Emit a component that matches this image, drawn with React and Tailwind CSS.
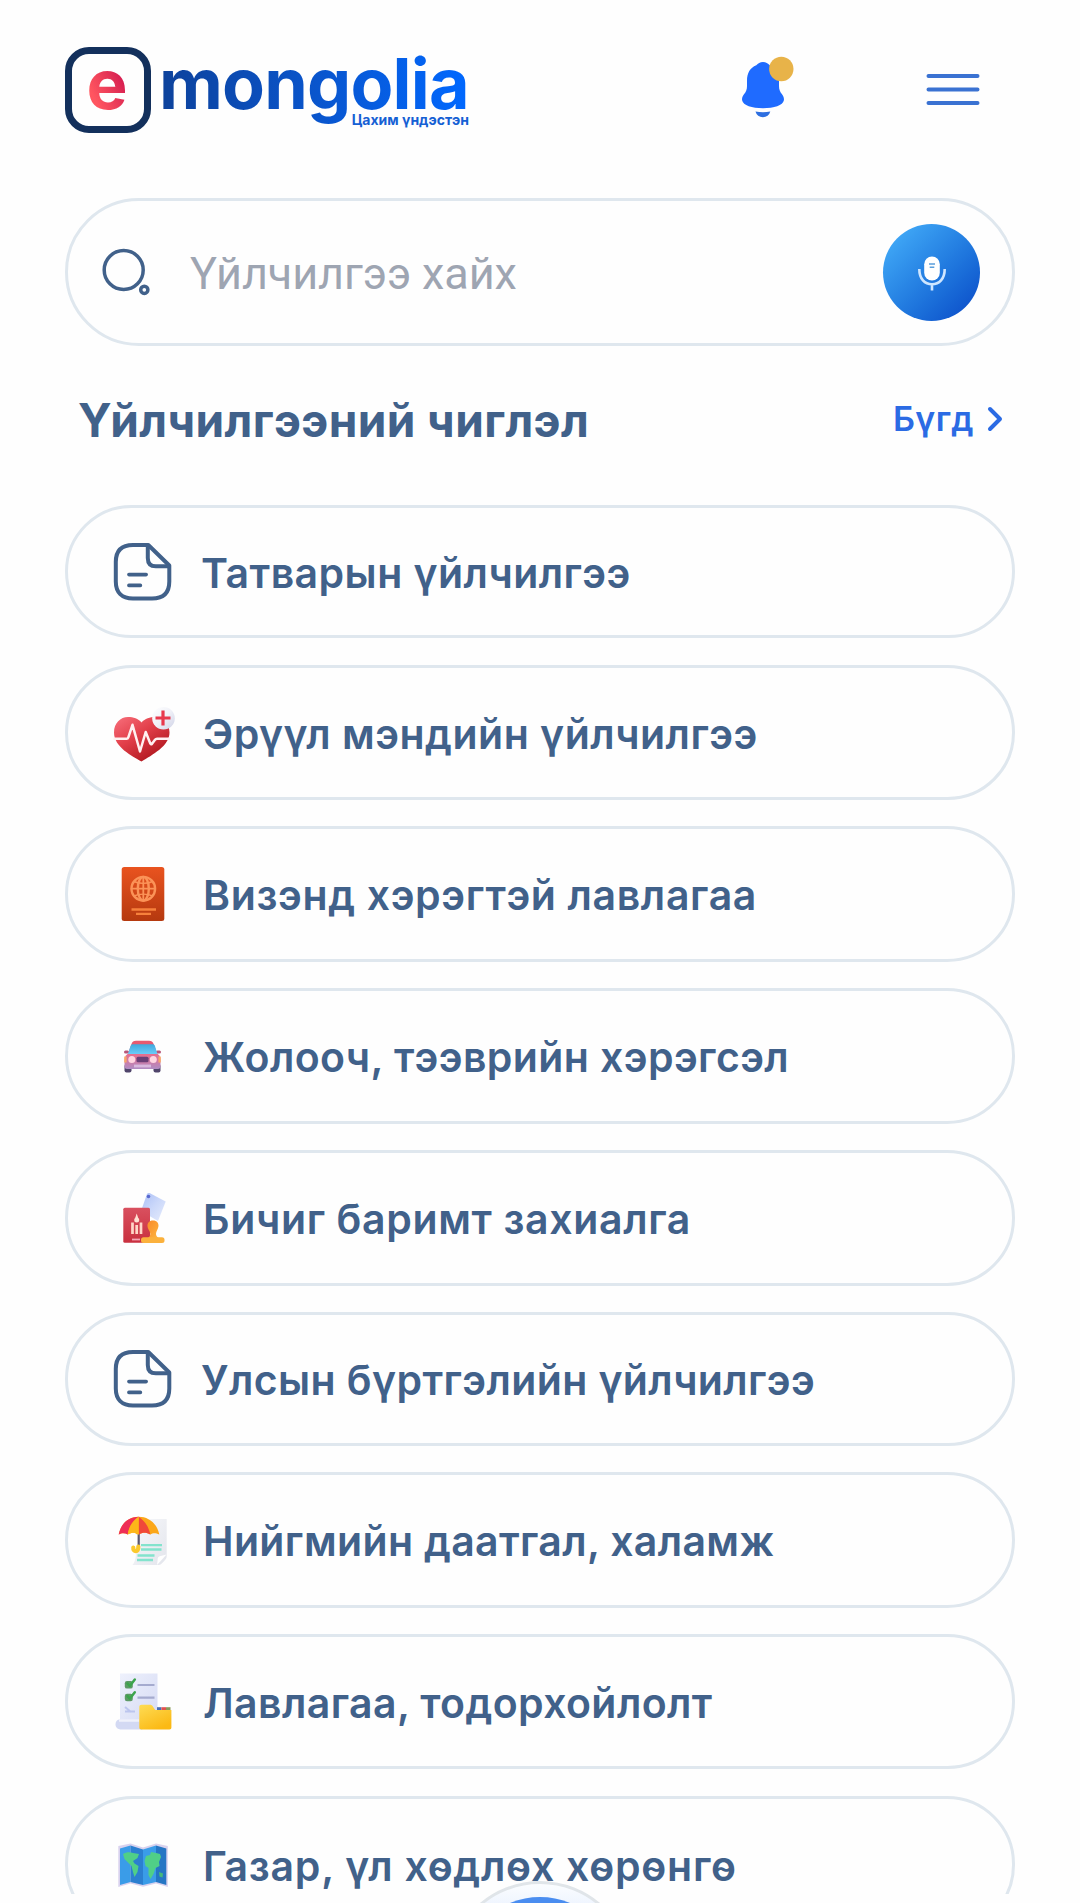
import React from "react";

const stroke = { fill: "none", strokeLinecap: "round", strokeLinejoin: "round" };

function Slot({ children }) {
  return (
    <svg viewBox="0 0 66 66" className="h-[66px] w-[66px] shrink-0">
      {children}
    </svg>
  );
}

function DocIcon() {
  return (
    <Slot>
      <g {...stroke} stroke="#41618a" strokeWidth="4">
        <path d="M38.3 6H23C11 6 5.8 12 5.8 23v19.5c0 11 6 17 17.2 17h19c11.5 0 17.3-6 17.3-17V26.5Z" />
        <path d="M37.8 7.500V19c0 5.500 3 8.300 8 8.300h13" />
        <path d="M18.900 35.600h17.300M18.900 46.400h11.500" strokeWidth="3.600" />
      </g>
    </Slot>
  );
}

function HeartIcon() {
  return (
    <Slot>
      <defs>
        <linearGradient id="heart" x1="0" y1="0" x2="0.800" y2="1">
          <stop offset="0" stopColor="#f8707c" />
          <stop offset="0.450" stopColor="#e23f4a" />
          <stop offset="1" stopColor="#a81218" />
        </linearGradient>
        <linearGradient id="badge" x1="0" y1="0" x2="1" y2="1">
          <stop offset="0" stopColor="#ffffff" />
          <stop offset="0.500" stopColor="#f0f1f8" />
          <stop offset="1" stopColor="#cfd2e6" />
        </linearGradient>
      </defs>
      <path d="M31.500 61.500C22 56 4 47 4 32.500 4 23 10.500 17 18 17c5.500 0 10 1.500 13.500 5.500C35 18.500 40 17 45 17c8.500 0 14.500 6.500 14.500 15.500C59.500 46 42 55 31.500 61.500Z" fill="url(#heart)" />
      <path d="M4.500 38.800h12c1 0 1.500-.5 1.800-1.500l4.200-12.500L30 51.500 35.700 32l4.600 11.500c.5 1 1 1 1.700.3l3-4c.6-.8 1-1 2-1h12" {...stroke} stroke="#fff1f1" strokeWidth="2.500" />
      <circle cx="53.500" cy="18.300" r="11.300" fill="url(#badge)" />
      <path d="M53 10.500v15M45.500 18h15" stroke="#e8384c" strokeWidth="3.200" />
    </Slot>
  );
}

function PassportIcon() {
  return (
    <Slot>
      <defs>
        <linearGradient id="pass" x1="0" y1="0" x2="0" y2="1">
          <stop offset="0" stopColor="#e9531f" />
          <stop offset="1" stopColor="#b5390f" />
        </linearGradient>
      </defs>
      <rect x="11.700" y="6" width="42.600" height="54" rx="2.500" fill="url(#pass)" />
      <g {...stroke} stroke="#fb9358" strokeWidth="2.400">
        <circle cx="33.300" cy="27.700" r="11.800" />
        <ellipse cx="33.300" cy="27.700" rx="5.500" ry="11.800" />
        <path d="M33.300 16v23.400M21.500 27.700h23.600" strokeWidth="1.800" />
        <path d="M24 20.500c5 2.500 13.600 2.500 18.600 0M24 35c5-2.500 13.600-2.500 18.600 0" strokeWidth="1.400" />
      </g>
      <path d="M21.500 48.500h24.500M26 52.900h15" stroke="#f6813c" strokeWidth="2.300" />
    </Slot>
  );
}

function CarIcon() {
  return (
    <Slot>
      <defs>
        <linearGradient id="glass" x1="0" y1="0" x2="0" y2="1">
          <stop offset="0" stopColor="#3fa9dd" />
          <stop offset="1" stopColor="#6dcdfa" />
        </linearGradient>
        <linearGradient id="carbody" x1="0" y1="0" x2="0" y2="1">
          <stop offset="0" stopColor="#e86d8c" />
          <stop offset="1" stopColor="#b08cc4" />
        </linearGradient>
      </defs>
      <rect x="14.500" y="41" width="7" height="8.500" rx="2" fill="#50456b" />
      <rect x="43.500" y="41" width="7" height="8.500" rx="2" fill="#50456b" />
      <rect x="14" y="27.500" width="5" height="3" rx="1.500" fill="#b8567a" />
      <rect x="46" y="27.500" width="5" height="3" rx="1.500" fill="#b8567a" />
      <path d="M21.500 21c.8-2.300 2-3.200 4.500-3.200h13c2.500 0 3.800.9 4.600 3.200L47.500 31H17.800Z" fill="#e65a70" />
      <path d="M23 21.300h19.500c1.500 0 2 .6 2.500 2L47.600 31.500H17.700L20.500 23.300c.5-1.400 1-2 2.500-2Z" fill="url(#glass)" />
      <path d="M17.500 31h30.300c2 1.500 2.700 3.500 2.700 6v6.500c0 1.500-.8 2.500-2.500 2.500H17c-1.700 0-2.500-1-2.500-2.500V37c0-2.500 1-4.500 3-6Z" fill="url(#carbody)" />
      <rect x="26.500" y="33.800" width="12" height="5.500" rx="1.500" fill="#6a3f77" />
      <circle cx="21.800" cy="36.500" r="3.500" fill="#ffd5e1" />
      <circle cx="43.300" cy="36.500" r="3.500" fill="#ffd5e1" />
      <path d="M15.400 33.500v6M49.600 33.500v6" stroke="#f9a86a" strokeWidth="2.400" />
      <path d="M24 43h17" stroke="#d8b9df" strokeWidth="2.800" />
    </Slot>
  );
}

function StampIcon() {
  return (
    <Slot>
      <defs>
        <linearGradient id="bluecard" x1="0" y1="0" x2="1" y2="1">
          <stop offset="0" stopColor="#a9bdf5" />
          <stop offset="0.500" stopColor="#cbd8fa" />
          <stop offset="1" stopColor="#e6ecfc" />
        </linearGradient>
        <linearGradient id="redbook" x1="0" y1="0" x2="0" y2="1">
          <stop offset="0" stopColor="#d9505f" />
          <stop offset="1" stopColor="#c9303f" />
        </linearGradient>
        <linearGradient id="stamp" x1="0" y1="0" x2="1" y2="1">
          <stop offset="0" stopColor="#f98a2b" />
          <stop offset="1" stopColor="#fdb53f" />
        </linearGradient>
      </defs>
      <path d="M37 9c.6-1 1.500-1.300 2.500-.9L55.700 16.500 48 36 31 26Z" fill="url(#bluecard)" />
      <circle cx="38.500" cy="11.500" r="1.800" fill="#5868cf" />
      <rect x="13.300" y="22.700" width="26.700" height="35" rx="1.500" fill="url(#redbook)" />
      <path d="M22.500 37.500v11.500M31 37.500v11.500M26.700 40v9" stroke="#ffd6c8" strokeWidth="2.700" />
      <circle cx="26.700" cy="35" r="2.500" fill="#ffe1d3" />
      <path d="M26.700 28.500l1.700 5h-3.400Z" fill="#ffe1d3" />
      <path d="M22 54.500h8" stroke="#f4a7b5" strokeWidth="1.800" />
      <path d="M43 35.500c4 0 5.700 2.500 5.500 5.500-.3 3.500-2.500 5-2.500 8 0 2 1.500 3 2.500 4H38c1-1 2.300-2 2.300-4 0-3-2.600-4.500-2.800-8-.2-3 1.500-5.500 5.500-5.500Z" fill="url(#stamp)" />
      <rect x="31" y="52.300" width="23.500" height="5.600" rx="2.500" fill="#fbb13c" />
    </Slot>
  );
}

function UmbrellaIcon() {
  return (
    <Slot>
      <defs>
        <linearGradient id="sheet" x1="0" y1="0" x2="1" y2="1">
          <stop offset="0" stopColor="#f8f9fb" />
          <stop offset="1" stopColor="#e3e5ec" />
        </linearGradient>
      </defs>
      <path d="M30 12h26.700v37c0 2-1 3.500-2.500 5l-3 3c-1 .8-1.700 1-3 1H22.500c1.500-2 2.500-4 3-7Z" fill="url(#sheet)" />
      <path d="M56.500 47.500 47 58l.8-6.500c.2-1.500 1-2 2-2.300Z" fill="#ffffff" />
      <path d="M31 38.200h21M31 42.500h20.500M27.500 48.500h17M27 53h16" stroke="#83e3cd" strokeWidth="2.300" />
      <path d="M28.700 27v14" stroke="#5a5670" strokeWidth="2.200" />
      <path d="M28.300 39.500c.5 6.500-5.500 5.500-5 1" {...stroke} stroke="#fbc92d" strokeWidth="4.200" />
      <path d="M8.700 27.500C11 16 19 9.700 28.700 9.700S47 16 49.300 27.500c-4-2-6.500-1.600-9 0-4-2.300-7.600-2.300-11.600 0-4-2.300-7-2.300-11 0-2.700-1.600-5.500-2-9 0Z" fill="#fba719" />
      <path d="M8.700 27.500C11 16 18.500 9.900 28.700 9.700 23 13 19 19 17.700 27.500c-2.700-1.600-5.500-2-9 0Z" fill="#ee2f56" />
      <path d="M28.700 9.700c-6 4-9.500 10-11 17.800 3.500-2 7-2.300 9.500-1.200Z" fill="#fdb71a" />
      <path d="M28.700 9.700c6 4 10 10 11.600 17.800-4-2.300-7.600-2.300-11.600 0Z" fill="#f0483a" />
      <path d="M28.700 9.700c-3.500 5-3.500 11-3 17.300l3 .5Z" fill="#fdb71a" />
    </Slot>
  );
}

function ChecklistIcon() {
  return (
    <Slot>
      <defs>
        <linearGradient id="list" x1="0" y1="0" x2="1" y2="1">
          <stop offset="0" stopColor="#eef1fc" />
          <stop offset="1" stopColor="#d5daf4" />
        </linearGradient>
        <linearGradient id="folder" x1="0" y1="0" x2="0.600" y2="1">
          <stop offset="0" stopColor="#fedc55" />
          <stop offset="1" stopColor="#fbb914" />
        </linearGradient>
      </defs>
      <path d="M10 4.500h37.500V55H10Z" fill="url(#list)" />
      <path d="M9 50.500h19.300l4 10H11.500c-4 0-6-2.300-6-5s1.500-5 3.500-5Z" fill="#d3d9f3" />
      <path d="M9 51.500h20" stroke="#eff1fb" strokeWidth="2.500" />
      <path d="M27.500 16h17M27.500 28.700h17" stroke="#a5abcf" strokeWidth="2.200" />
      <path d="M15 38l6 5M15 42.500h10" stroke="#bcc5ee" strokeWidth="2" />
      <rect x="14.800" y="12" width="8" height="7.600" rx="2.200" fill="#5d9a66" />
      <rect x="14.800" y="24.700" width="8" height="7.600" rx="2.200" fill="#5d9a66" />
      <path d="M17.500 14.500l2.300 2.500 5-6.500M17.500 27.200l2.300 2.500 5-6.500" {...stroke} stroke="#3ba44b" strokeWidth="2.500" />
      <path d="M47 39.700h4.500" stroke="#4a6fb5" strokeWidth="3" />
      <path d="M51.500 39.700H56" stroke="#e2504d" strokeWidth="3" />
      <path d="M56 39.700h4.500" stroke="#8a9a58" strokeWidth="3" />
      <path d="M29.300 38c0-1.500.8-2.200 2.200-2.200H40c1.300 0 2 .5 2.700 1.500l2.500 3.700h16.200v17.500c0 1.300-.7 2-2 2H31.300c-1.300 0-2-.7-2-2Z" fill="url(#folder)" />
    </Slot>
  );
}

function MapIcon() {
  return (
    <Slot>
      <path d="M8.300 14 20.500 11.500 33 15.500 46 11.500 57.800 14v41L46 51.500 33 54.800 20.500 51.500 8.300 55Z" fill="#d9d2ee" />
      <path d="M10 16.500 20.500 13.500V50L10 53Z" fill="#3a9ce8" />
      <path d="M20.500 13.500 33 17.500V53L20.500 50Z" fill="#2b7fd0" />
      <path d="M33 17.500 46 13.500V50L33 53Z" fill="#3a9ce8" />
      <path d="M46 13.500 56.300 16.500V53L46 50Z" fill="#2576c4" />
      <path d="M13 22c3-2 7-2 10-1l6 1-1.500 4-4.500 3 1.500 2.500 4 2.500-1 6-3 5-1.500-5-1.500-6-4-4-3-3Z" fill="#50cf87" />
      <path d="M36 24l4-1 1-3 5 1 4 1 1 3-2 5 .5 4-4 2-2 6-3 5-2-4 0-7-3-2-1-5Z" fill="#50cf87" />
      <path d="M49 40l4 1.500-.5 4-3-1Z" fill="#46b97a" />
    </Slot>
  );
}

const services = [
  { label: "Татварын үйлчилгээ", Icon: DocIcon, box: "h-[133px]", text: "ml-[25px] tracking-[0.45px]" },
  { label: "Эрүүл мэндийн үйлчилгээ", Icon: HeartIcon, box: "mt-[27px] h-[135px]", text: "ml-[27px] tracking-[0.5px]" },
  { label: "Визэнд хэрэгтэй лавлагаа", Icon: PassportIcon, box: "mt-[26px] h-[136px]", text: "ml-[27px] tracking-[0.65px]" },
  { label: "Жолооч, тээврийн хэрэгсэл", Icon: CarIcon, box: "mt-[26px] h-[136px]", text: "ml-[27px] tracking-[0.4px]" },
  { label: "Бичиг баримт захиалга", Icon: StampIcon, box: "mt-[26px] h-[136px]", text: "ml-[27px] tracking-[0.65px]" },
  { label: "Улсын бүртгэлийн үйлчилгээ", Icon: DocIcon, box: "mt-[26px] h-[134px]", text: "ml-[25px] tracking-[0.4px]" },
  { label: "Нийгмийн даатгал, халамж", Icon: UmbrellaIcon, box: "mt-[26px] h-[136px]", text: "ml-[27px] tracking-[0.35px]" },
  { label: "Лавлагаа, тодорхойлолт", Icon: ChecklistIcon, box: "mt-[26px] h-[135px]", text: "ml-[27px] tracking-[0.4px]" },
  { label: "Газар, үл хөдлөх хөрөнгө", Icon: MapIcon, box: "mt-[27px] h-[137px]", text: "ml-[27px] tracking-[0.75px]" },
];

export default function App() {
  return (
    <div className="relative h-[1903px] w-[1080px] overflow-hidden bg-[#fefefe] pl-[65px] pr-[65px] font-['Inter',sans-serif]">
      <header className="flex h-[198px] items-start pt-[47px]">
        <div className="flex h-[86px] w-[86px] items-center justify-center rounded-[24px] border-[7px] border-[#13305c]">
          <span className="-ml-[2px] bg-gradient-to-tr from-[#ff5560] from-30% to-[#d3124f] to-80% bg-clip-text pb-[12px] text-[69px] font-bold leading-[72px] text-transparent">e</span>
        </div>
        <div className="-mt-[5px] ml-[8px] flex w-[310px] flex-col">
          <span className="self-start bg-gradient-to-r from-[#0d429b] to-[#0068ff] bg-clip-text text-[70px] font-bold leading-[84px] tracking-[-0.8px] text-transparent">mongolia</span>
          <span className="-mt-[14px] self-end whitespace-nowrap text-[14px] font-bold leading-[16px] text-[#1560d4]">Цахим үндэстэн</span>
        </div>
        <svg viewBox="0 0 54 64" className="ml-[271px] mt-[8px] h-[64px] w-[54px]">
          <path d="M23 7c3 0 5 1.300 6.700 3.300C36 13 39 18 39 26v5c0 4 1 5.500 3 8.300 1.500 2 2.200 4 1.900 6C43 50.500 34 53.300 23 53.300S3 50.500 2.100 45.300c-.3-2 .4-4 1.900-6C6 36.500 7 35 7 31v-5c0-8 3-13 9.300-15.700C18 8.300 20 7 23 7Z" fill="#1f6bff" />
          <path d="M15.500 56.500c5 1 10 1 14.800 0-1 3.800-3.800 5.700-7.400 5.700s-6.400-1.900-7.400-5.700Z" fill="#2e6fe0" />
          <circle cx="41.300" cy="14" r="12.200" fill="#e8b349" />
        </svg>
        <svg viewBox="0 0 54 34" className="ml-[132px] mt-[26px] h-[34px] w-[54px]">
          <path d="M2.500 3h49M2.500 16.500h49M2.500 30h49" stroke="#3a72d2" strokeWidth="4" strokeLinecap="round" />
        </svg>
      </header>

      <div className="flex h-[148px] items-center rounded-full border-[3px] border-[#dfe7ee] pl-[32px] pr-[32px]">
        <svg viewBox="0 0 52 52" className="h-[52px] w-[52px]">
          <g fill="none" stroke="#41618a" strokeWidth="3.500">
            <circle cx="23.700" cy="24" r="19.500" />
            <circle cx="44.300" cy="43.800" r="3.600" />
          </g>
        </svg>
        <span className="ml-[38px] mt-[4px] font-['Roboto',sans-serif] text-[45px] leading-[56px] tracking-[-0.1px] text-[#9ea5b2]">Үйлчилгээ хайх</span>
        <div className="ml-auto mt-[1px] flex h-[97px] w-[97px] items-center justify-center rounded-full bg-gradient-to-br from-[#41a9f7] from-10% to-[#0f52cb] to-90%">
          <svg viewBox="0 0 30 38" className="h-[38px] w-[30px]">
            <rect x="7.200" y="2.500" width="15.600" height="24" rx="7.800" fill="#ffffff" />
            <path d="M2.300 15c0 10 5.500 15.300 12.700 15.300S27.700 25 27.700 15M15 30.500v6" fill="none" stroke="#cfe6ff" strokeWidth="2.600" />
            <path d="M12 10h6M12.700 13.300h4.600" stroke="#5b9fdc" strokeWidth="1.600" />
          </svg>
        </div>
      </div>

      <div className="flex h-[159px] items-start justify-between pl-[13px] pr-[12px]">
        <h1 className="mt-[42px] text-[46px] font-bold leading-[64px] tracking-[0.4px] text-[#41618a]">Үйлчилгээний чиглэл</h1>
        <div className="mt-[49px] flex items-center">
          <span className="text-[34px] font-semibold leading-[48px] tracking-[0.4px] text-[#2b6be4]">Бүгд</span>
          <svg viewBox="0 0 16 26" className="ml-[13px] h-[26px] w-[16px]">
            <path d="M3 3l10 10L3 23" {...stroke} stroke="#2b6be4" strokeWidth="4" />
          </svg>
        </div>
      </div>

      <main>
        {services.map(({ label, Icon, box, text }) => (
          <div key={label} className={`flex items-center rounded-[68px] border-[3px] border-[#dfe7ee] pl-[42px] ${box}`}>
            <Icon />
            <span className={`mt-[2px] whitespace-nowrap text-[41px] font-semibold leading-[56px] text-[#41618a] ${text}`}>{label}</span>
          </div>
        ))}
      </main>

      <div className="absolute left-0 top-[1894px] h-[9px] w-full bg-[#fefefe]" />
      <div className="absolute left-[447px] top-[1881px] flex h-[186px] w-[186px] items-center justify-center rounded-full border-[3px] border-[#e0e5e9] bg-gradient-to-b from-[#fbfdff] to-[#e6effe] to-20%">
        <div className="h-[154px] w-[154px] rounded-full bg-[#4a8df0]" />
      </div>
    </div>
  );
}
